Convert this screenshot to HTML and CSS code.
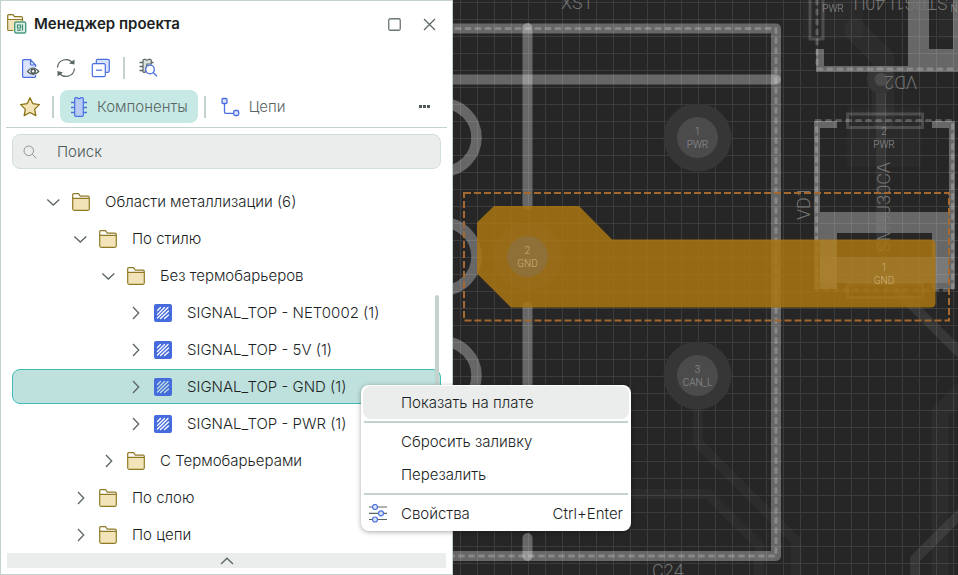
FILE: index.html
```html
<!DOCTYPE html>
<html lang="ru">
<head>
<meta charset="utf-8">
<title>Менеджер проекта</title>
<link rel="stylesheet" href="styles.css">
</head>
<body>
<svg class="defs" aria-hidden="true">
  <symbol id="folder" viewBox="0 0 18 18">
    <path d="M1 4.500V15.500a1.500 1.500 0 0 0 1.500 1.500h13a1.500 1.500 0 0 0 1.500-1.500V5.500H1z" fill="#f3e3b8"/>
    <path d="M.7 5.200V1.700Q.7.700 1.700.700H6.500L8.300 3.200H16Q17.300 3.200 17.300 4.500V5.200z" fill="#fff"/>
    <path d="M.7 5.300V1.800Q.7.700 1.800.700H6.500L8.300 3.200H16Q17.300 3.200 17.300 4.500V15.800Q17.300 17.300 15.800 17.300H2.200Q.7 17.300.7 15.800V5.300H17.300" fill="none" stroke="#8f7a24" stroke-width="1.200"/>
  </symbol>
  <symbol id="fill" viewBox="0 0 18 18">
    <rect width="18" height="18" rx="2" fill="#466bdc"/>
    <path d="M3.500 6.500 6.500 3.500M3.500 10.500 10.500 3.500M3.500 14 14 3.500M6.500 14.500 14.500 7M10.500 14.500 14.500 11" stroke="currentColor" stroke-width="1.300" stroke-linecap="round"/>
  </symbol>
  <symbol id="open" viewBox="0 0 18 18"><path d="M3.300 6.500 9.300 12 15.300 6.500" fill="none" stroke="#5a6664" stroke-width="1.300"/></symbol>
  <symbol id="closed" viewBox="0 0 18 18"><path d="M7 3 12.700 9 7 15" fill="none" stroke="#5a6664" stroke-width="1.300"/></symbol>
</svg>

<div class="app">
  <aside class="panel">
    <header class="title-bar">
      <svg class="title-icon" viewBox="0 0 20 20" width="20" height="20" fill="none">
        <path d="M1.500 16.500V2.500Q1.500 1.500 2.500 1.500H6L7.500 3.500H13.500Q15.500 3.500 15.500 5V9H7V17H2z" fill="#f3e3b8"/>
        <path d="M2 3.500V2H6L7.500 4H15V5.500H2z" fill="#fff"/>
        <path d="M6 16.500H2Q.700 16.500.700 15.500V1.700Q.700.700 1.700.700H6L7.500 2.700H14Q15.500 2.700 15.500 4V7M1 5.500H15" stroke="#8f7a24" stroke-width="1.200"/>
        <rect x="7.700" y="8" width="11" height="11" rx="1.500" fill="#dff0e8" stroke="#4c9a7c" stroke-width="1.400"/>
        <path d="M10.500 11h3v3h-3zM15.500 10.500v6M10 16.200h4" stroke="#3c8a6c" stroke-width="1.200"/>
      </svg>
      <h1>Менеджер проекта</h1>
      <button class="window-button" type="button" aria-label="Развернуть"><svg viewBox="0 0 13 13" width="13" height="13"><rect x=".750" y=".750" width="11.500" height="11.500" rx="1.500" fill="none" stroke="#6b7775" stroke-width="1.300"/></svg></button>
      <button class="window-button" type="button" aria-label="Закрыть"><svg viewBox="0 0 13 13" width="13" height="13"><path d="M1 1 12 12M12 1 1 12" stroke="#5a6664" stroke-width="1.200"/></svg></button>
    </header>

    <div class="toolbar">
      <button class="tool" type="button" aria-label="Предпросмотр">
        <svg viewBox="0 -1 20 20" fill="none">
          <path d="M1.600 18.400V1.600Q1.600.700 2.600.700H9.500L14.500 5.700V18.300H2.500z" fill="#dbe3fb"/>
          <path d="M14.600 16V17.300Q14.600 18.300 13.600 18.300H2.600Q1.600 18.300 1.600 17.300V1.700Q1.600.700 2.600.700H9.500L14.600 6V8M9.500.700V5Q9.500 6 10.500 6H14.600" stroke="#4a6fe0" stroke-width="1.200"/>
          <path d="M6.500 12.500Q12 5.500 17.700 12.500 12 18.500 6.500 12.500z" fill="#fff" stroke="#4f5b59" stroke-width="1.200"/>
          <circle cx="12.200" cy="12.200" r="2" stroke="#4f5b59" stroke-width="1.600"/>
        </svg>
      </button>
      <button class="tool" type="button" aria-label="Обновить">
        <svg viewBox="0 0 20 20" fill="none" stroke="#5a6664" stroke-width="1.200">
          <path d="M1.500 9.500A8.500 8.500 0 0 1 16.500 4.700M18.500 10.500A8.500 8.500 0 0 1 3.500 15.300"/>
          <path d="M18.500 1.500V6.500L13 5.500zM1.500 18.500V13L7 14.500z" fill="#5a6664" stroke="none"/>
        </svg>
      </button>
      <button class="tool" type="button" aria-label="Свернуть все">
        <svg viewBox="0 0 20 20" fill="none" stroke="#4a6fe0" stroke-width="1.200">
          <rect x="5.300" y="1.300" width="13" height="13" rx="1.500" fill="#dbe3fb"/>
          <rect x="1.300" y="5.700" width="13" height="13" rx="1.500" fill="#fff"/><path d="M5 12.200H11"/>
        </svg>
      </button>
      <span class="divider"></span>
      <button class="tool" type="button" aria-label="Найти компонент">
        <svg viewBox="0 0 20 20" fill="none" stroke="#5a6664" stroke-width="1.200">
          <path d="M5 13V2.500Q5 1.300 6.200 1.300H7.500Q9 3 10.500 1.300H12Q13.300 1.300 13.300 2.500V6H9L7 14.500H6.200Q5 14.500 5 13.200z" fill="#dce0df"/>
          <path d="M1.500 4.500H5M1.500 8.500H5M1.500 12.500H5M13.500 4.500H15.500" stroke-width="1.500"/>
          <circle cx="12" cy="11.500" r="4.300" fill="#fff" stroke="#4a6fe0" stroke-width="1.300"/><path d="M15 14.500 19 18.300" stroke="#4a6fe0" stroke-width="1.300"/>
        </svg>
      </button>
    </div>

    <nav class="tabs">
      <button class="tool favourite" type="button" aria-label="Избранное">
        <svg viewBox="0 0 20 20"><path d="M10 .800 12.900 6.700 19.400 7.600 14.700 12.100 15.800 18.600 10 15.500 4.200 18.600 5.300 12.100.600 7.600 7.100 6.700z" fill="#f3e3b8" stroke="#8a7213" stroke-width="1.300" stroke-linejoin="round"/></svg>
      </button>
      <span class="divider"></span>
      <button class="tab active" type="button">
        <svg viewBox="0 0 20 20" fill="none" stroke="#4a6fe0" stroke-width="1.200">
          <path d="M5.700 1.800Q5.700.700 6.800.700H8Q10 2.500 12 .700H13.200Q14.300.700 14.300 1.800V18.200Q14.300 19.300 13.200 19.300H6.800Q5.700 19.300 5.700 18.200z" fill="#b8cbf3"/>
          <path d="M2 5.500H5.500M2 10.500H5.500M2 15.500H5.500M14.500 5.500H18M14.500 10.500H18M14.500 15.500H18" stroke-width="1.500"/>
        </svg>
        Компоненты
      </button>
      <span class="divider"></span>
      <button class="tab" type="button">
        <svg viewBox="1 0 20 20" fill="none" stroke="#4a6fe0" stroke-width="1.300">
          <rect x="2" y="1.500" width="5" height="5" rx="1" fill="#dbe3fb"/><path d="M4.500 6.500V15Q4.500 16.300 5.700 16.300H13.500"/><rect x="13.700" y="13.500" width="5" height="5" rx="1.500" fill="#dbe3fb"/>
        </svg>
        Цепи
      </button>
      <button class="more" type="button" aria-label="Ещё"><svg viewBox="0 0 11 3" width="11" height="3"><path d="M0 0h3v3H0zM4 0h3v3H4zM8 0h3v3H8z" fill="#4f5b59"/></svg></button>
    </nav>

    <label class="search">
      <svg viewBox="0 0 14 14" width="14" height="14" fill="none" stroke="#8b9896"><circle cx="5.800" cy="5.800" r="4.800"/><path d="M9.300 9.300 13.300 13.300"/></svg>
      <input type="text" placeholder="Поиск" aria-label="Поиск">
    </label>

    <div class="tree-area">
      <ul class="tree">
        <li><button class="row level-1" type="button"><svg><use href="#open"/></svg><svg><use href="#folder"/></svg><span>Области металлизации (6)</span></button></li>
        <li><button class="row level-2" type="button"><svg><use href="#open"/></svg><svg><use href="#folder"/></svg><span>По стилю</span></button></li>
        <li><button class="row level-3" type="button"><svg><use href="#open"/></svg><svg><use href="#folder"/></svg><span>Без термобарьеров</span></button></li>
        <li><button class="row level-4" type="button"><svg><use href="#closed"/></svg><svg><use href="#fill"/></svg><span>SIGNAL_TOP - NET0002 (1)</span></button></li>
        <li><button class="row level-4" type="button"><svg><use href="#closed"/></svg><svg><use href="#fill"/></svg><span>SIGNAL_TOP - 5V (1)</span></button></li>
        <li><button class="row level-4 selected" type="button"><svg><use href="#closed"/></svg><svg><use href="#fill"/></svg><span>SIGNAL_TOP - GND (1)</span></button></li>
        <li><button class="row level-4" type="button"><svg><use href="#closed"/></svg><svg><use href="#fill"/></svg><span>SIGNAL_TOP - PWR (1)</span></button></li>
        <li><button class="row level-3" type="button"><svg><use href="#closed"/></svg><svg><use href="#folder"/></svg><span>С Термобарьерами</span></button></li>
        <li><button class="row level-2" type="button"><svg><use href="#closed"/></svg><svg><use href="#folder"/></svg><span>По слою</span></button></li>
        <li><button class="row level-2" type="button"><svg><use href="#closed"/></svg><svg><use href="#folder"/></svg><span>По цепи</span></button></li>
      </ul>
      <div class="scroll-thumb"></div>
    </div>

    <button class="collapse" type="button" aria-label="Показать свойства"><svg viewBox="0 0 14 8" width="14" height="8"><path d="M1 7 7 1.200 13 7" fill="none" stroke="#5a6664" stroke-width="1.300"/></svg></button>
  </aside>

  <main class="board">
    <svg viewBox="453 0 505 575" preserveAspectRatio="xMinYMin slice" role="img" aria-label="Печатная плата">
      <defs>
        <pattern id="grid" x="460" y="2" width="17" height="17" patternUnits="userSpaceOnUse">
          <path d="M0 .5H17M.5 0V17" stroke="#3c3c3c"/>
        </pattern>
      </defs>
      <rect x="453" width="505" height="575" fill="#262626"/>
      <rect x="453" width="505" height="575" fill="url(#grid)"/>

      <!-- traces on the lower layers -->
      <g fill="none" stroke="#fff" stroke-linejoin="round" stroke-linecap="round">
        <g stroke-opacity=".030">
          <path d="M855 30 883 58V120" stroke-width="22"/>
          <path d="M940 580V413L965 388" stroke-width="17"/>
          <path d="M698 405V443L796 541V580" stroke-width="10"/>
          <path d="M600 494H708L759 545V580" stroke-width="10"/>
        </g>
        <path d="M881 79V250" stroke-width="10" stroke-opacity=".060"/>
        <path d="M890 283 965 358M915 580V559L965 509" stroke-width="10" stroke-opacity=".080"/>
      </g>
      <path d="M847 107H921V167H847zM803 0H863V39H803zM939 0H958V39H939z" fill="#fff" fill-opacity=".020"/>

      <!-- connector outline -->
      <g fill="none" stroke="#fff" stroke-opacity=".300" stroke-width="10" stroke-linejoin="round" stroke-linecap="round">
        <path d="M440 28.500H776V556H440"/>
        <path d="M440 79.500H776"/>
        <path d="M527.500 28V205M527.500 307V460M527.500 538V556"/>
        <g stroke-width="10.500"><circle cx="442.500" cy="137.500" r="34"/><circle cx="442.500" cy="256.500" r="34"/><circle cx="442.500" cy="375.500" r="34"/></g>
      </g>
      <path d="M446 28.500H776V556H446" class="dash"/>

      <!-- pads and vias -->
      <g fill="#363636"><circle cx="697.500" cy="137.500" r="34"/><circle cx="697.500" cy="375.500" r="34"/><circle cx="881" cy="79.500" r="14"/></g>
      <g fill="#4b4b4b"><circle cx="697.500" cy="137.500" r="20.500"/><circle cx="697.500" cy="375.500" r="20.500"/><circle cx="881" cy="79.500" r="6.500"/></g>

      <!-- diode VD2 -->
      <g fill="#fff" fill-opacity=".300">
        <path d="M816 49H824V66H958V72H816z"/>
        <path d="M908 0H929V49H958V66H908zM953 0H958V49H953z"/>
      </g>
      <path d="M810 -5V39H823V-5" fill="none" stroke="#fff" stroke-opacity=".170" stroke-width="3"/>
      <path d="M817 0V69H958" class="dash"/>

      <!-- diode VD1 -->
      <g fill="#fff" fill-opacity=".300">
        <path d="M814 121H837V128H820V289H814zM932 121H955V289H949V128H932z"/>
        <path d="M820 212H949V289H932V233H837V289H820z"/>
      </g>
      <path d="M820 257H949V283H820z" fill="#fff" fill-opacity=".120"/>
      <path d="M816.500 120.500H952.500V290H816.500z" class="dash"/>
      <path d="M847.500 114H922.500V127.500H847.500zM847.500 284H922.500V297.500H847.500z" fill="none" stroke="#fff" stroke-opacity=".170" stroke-width="3"/>

      <g class="designator">
        <text x="561" y="9">XS1</text>
        <text x="652" y="577">C24</text>
        <text transform="translate(917 76) rotate(180)">VD2</text>
        <text transform="translate(948 -3) rotate(180)">STPS1L40U</text>
        <text transform="translate(810 220) rotate(-90)">VD1</text>
        <text transform="translate(890 252) rotate(-90)">SMBJ30CA</text>
      </g>

      <!-- highlighted copper area -->
      <path d="M494 206H579L612 239.500H931Q935.500 239.500 935.500 244V303Q935.500 307.500 931 307.500H511L477 273.500V222.500z" fill="#aa7513" fill-opacity=".850"/>
      <path d="M820 240H837V289H820zM837 257H932V283H837z" fill="#fff" fill-opacity=".060"/>
      <circle cx="527.500" cy="256.500" r="34" fill="#fff" fill-opacity=".020"/>
      <circle cx="527.500" cy="256.500" r="20.500" fill="#8f7037"/>
      <rect x="464" y="193" width="485" height="127.500" fill="none" stroke="#a5682f" stroke-width="2" stroke-dasharray="7 3"/>

      <g class="pin">
        <text x="697.500" y="135">1</text><text x="697.500" y="148">PWR</text>
        <text x="697.500" y="373">3</text><text x="697.500" y="386">CAN_L</text>
        <text x="884" y="135">2</text><text x="884" y="148">PWR</text>
        <text x="833" y="12">PWR</text><text x="960" y="12">NET</text>
        <g class="pin-gold">
          <text x="527.500" y="254">2</text><text x="527.500" y="267">GND</text>
          <text x="884" y="271">1</text><text x="884" y="284">GND</text>
        </g>
      </g>
    </svg>
  </main>

  <div class="menu" role="menu">
    <button class="menu-item current" type="button" role="menuitem">Показать на плате</button>
    <hr>
    <button class="menu-item" type="button" role="menuitem">Сбросить заливку</button>
    <button class="menu-item" type="button" role="menuitem">Перезалить</button>
    <hr>
    <button class="menu-item" type="button" role="menuitem">
      <svg class="menu-icon" viewBox="0 0 18 20" width="18" height="20"><path d="M0 3H18M0 9.300H18M0 15.500H18" stroke="#5a6664" stroke-width="1.200"/><g fill="#dbe3fb" stroke="#4a6fe0" stroke-width="1.200"><circle cx="6" cy="3" r="2.500"/><circle cx="12" cy="9.300" r="2.500"/><circle cx="6" cy="15.500" r="2.500"/></g></svg>
      <span>Свойства</span><kbd>Ctrl+Enter</kbd>
    </button>
  </div>
</div>
</body>
</html>
```
FILE: styles.css
```css
* { box-sizing: border-box; }

body {
  margin: 0;
  font: 300 15px/20px Inter, "Noto Sans", sans-serif;
  color: #1c1f1f;
}

button, input { font: inherit; color: inherit; }

button {
  display: flex;
  align-items: center;
  margin: 0;
  padding: 0;
  border: 0;
  background: none;
  text-align: left;
}

.defs { position: absolute; width: 0; height: 0; }

.app {
  position: relative;
  display: grid;
  grid-template-columns: minmax(320px, 453px) 1fr;
  height: 100vh;
  overflow: hidden;
}

.panel {
  display: flex;
  flex-direction: column;
  min-height: 0;
  background: #fff;
  border: 1px solid #c4d2cf;
}

.title-bar {
  display: flex;
  align-items: center;
  height: 46px;
  padding: 0 11px 0 6px;
  flex: none;
}

.title-icon { flex: none; }

h1 {
  flex: 1;
  margin: 0 0 0 7px;
  font-size: 15px;
  font-weight: 600;
}

.window-button { justify-content: center; width: 35px; height: 30px; }
.window-button:last-child { margin-right: -6px; }

.toolbar, .tabs { display: flex; align-items: center; flex: none; }

.toolbar { height: 42px; padding-left: 20px; gap: 15px; }

.tool svg, .tab svg { display: block; width: 20px; height: 20px; }

.divider { width: 2px; height: 22px; background: #c4d2cf; }

.toolbar .divider { margin: 0 -2px 0 -3px; }

.tabs {
  height: 39px;
  margin: 0 5px;
  padding: 0 13px 3px 14px;
  border-bottom: 1px solid #c4d2cf;
}

.favourite { margin-right: 12px; }

.tab {
  height: 33px;
  margin: 0 6px;
  padding: 0 10px 0 9px;
  gap: 8px;
  border-radius: 8px;
  color: #5a6664;
}

.tab.active { background: #c7e9e5; }

.more { height: 20px; margin-left: auto; margin-right: 4px; }

.search {
  display: flex;
  align-items: center;
  flex: none;
  gap: 20px;
  height: 35px;
  margin: 6px 11px 0;
  padding: 0 10px;
  border: 1px solid #d3dfdc;
  border-radius: 8px;
  background: #eaedec;
}

.search input {
  flex: 1;
  min-width: 0;
  padding: 0;
  border: 0;
  outline: 0;
  background: none;
}

.search input::placeholder { color: #4f5b59; opacity: 1; }

.tree-area {
  position: relative;
  flex: 1;
  min-height: 0;
  margin: 15px 11px 0;
}

.tree {
  display: flex;
  flex-direction: column;
  gap: 2px;
  height: 100%;
  margin: 0;
  padding: 0;
  overflow: hidden;
  list-style: none;
}

.row {
  width: 100%;
  height: 35px;
  border: 1px solid transparent;
  border-radius: 8px;
  white-space: nowrap;
}

.row svg { width: 18px; height: 18px; margin-right: 10px; color: #fff; }
.row span { margin-left: 5px; }
.row.selected { background: #bfe1dd; border-color: #3fbdb2; }
.row.selected svg { color: #bfe1dd; }

.level-1 { padding-left: 31px; }
.level-2 { padding-left: 58px; }
.level-3 { padding-left: 86px; }
.level-4 { padding-left: 113px; }

.scroll-thumb {
  position: absolute;
  top: 111px;
  right: 2px;
  width: 4px;
  height: 200px;
  border-radius: 2px;
  background: #c4d2cf;
}

.collapse {
  flex: none;
  justify-content: center;
  height: 15px;
  margin: 0 6px 6px;
  background: #eaedec;
}

.board { min-width: 0; min-height: 0; background: #262626; overflow: hidden; }
.board svg { display: block; width: 100%; height: 100%; }

.dash {
  fill: none;
  stroke: #fff;
  stroke-opacity: .22;
  stroke-width: 3px;
  stroke-linecap: round;
  stroke-dasharray: 4 6;
}

.designator {
  font: 300 18px Roboto, "Liberation Sans", sans-serif;
  fill: #747474;
}

.pin {
  font: 300 10px Roboto, "Liberation Sans", sans-serif;
  fill: #949494;
  text-anchor: middle;
}

.pin-gold { fill: #cdb27a; }

.menu {
  position: absolute;
  top: 385px;
  left: 361px;
  width: 270px;
  padding: 1px 2px;
  border-radius: 8px;
  background: #fff;
  box-shadow: 0 1px 5px rgb(0 0 0 / 35%);
}

.menu-item {
  position: relative;
  justify-content: space-between;
  width: 100%;
  height: 33px;
  padding: 0 6px 0 38px;
  border-radius: 8px;
}

.menu-item.current { background: #eaedec; }
.menu-item kbd { font: inherit; }
.menu-icon { position: absolute; left: 6px; }

.menu hr {
  height: 2px;
  margin: 2px 1px;
  border: 0;
  background: #c4d2cf;
}
```
